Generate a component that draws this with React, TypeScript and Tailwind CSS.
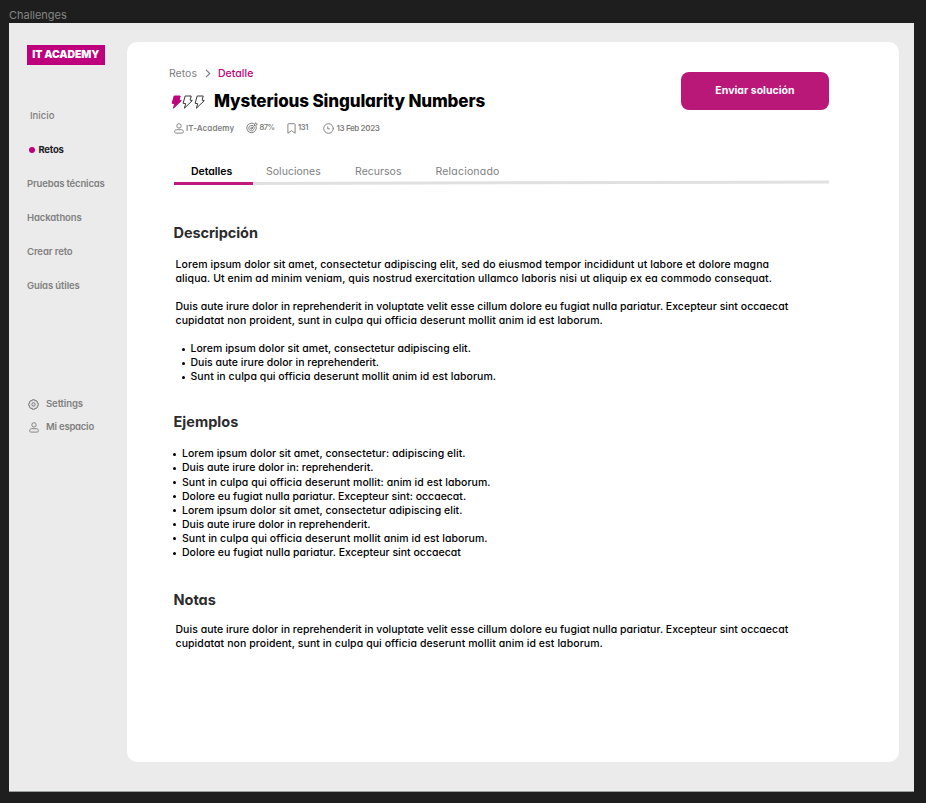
type LineProps = { text: string; tracking: string };

const description: LineProps[][] = [
  [
    { text: "Lorem ipsum dolor sit amet, consectetur adipiscing elit, sed do eiusmod tempor incididunt ut labore et dolore magna", tracking: "tracking-[0.081px]" },
    { text: "aliqua. Ut enim ad minim veniam, quis nostrud exercitation ullamco laboris nisi ut aliquip ex ea commodo consequat.", tracking: "tracking-[0.09px]" },
  ],
  [
    { text: "Duis aute irure dolor in reprehenderit in voluptate velit esse cillum dolore eu fugiat nulla pariatur. Excepteur sint occaecat", tracking: "tracking-[0.032px]" },
    { text: "cupidatat non proident, sunt in culpa qui officia deserunt mollit anim id est laborum.", tracking: "tracking-[0.08px]" },
  ],
];

const points: LineProps[] = [
  { text: "Lorem ipsum dolor sit amet, consectetur adipiscing elit.", tracking: "tracking-[0.036px]" },
  { text: "Duis aute irure dolor in reprehenderit.", tracking: "tracking-[0.01px]" },
  { text: "Sunt in culpa qui officia deserunt mollit anim id est laborum.", tracking: "tracking-[0.07px]" },
];

const examples: LineProps[] = [
  { text: "Lorem ipsum dolor sit amet, consectetur: adipiscing elit.", tracking: "tracking-[0.033px]" },
  { text: "Duis aute irure dolor in: reprehenderit.", tracking: "tracking-[0.003px]" },
  { text: "Sunt in culpa qui officia deserunt mollit: anim id est laborum.", tracking: "tracking-[0.066px]" },
  { text: "Dolore eu fugiat nulla pariatur. Excepteur sint: occaecat.", tracking: "tracking-[0px]" },
  { text: "Lorem ipsum dolor sit amet, consectetur adipiscing elit.", tracking: "tracking-[0.036px]" },
  { text: "Duis aute irure dolor in reprehenderit.", tracking: "tracking-[0.01px]" },
  { text: "Sunt in culpa qui officia deserunt mollit anim id est laborum.", tracking: "tracking-[0.07px]" },
  { text: "Dolore eu fugiat nulla pariatur. Excepteur sint occaecat", tracking: "tracking-[0.02px]" },
];

const nav = [
  { text: "Pruebas técnicas", tracking: "tracking-[-0.16px]" },
  { text: "Hackathons", tracking: "tracking-[-0.11px]" },
  { text: "Crear reto", tracking: "tracking-[-0.1px]" },
  { text: "Guías útiles", tracking: "tracking-[-0.11px]" },
];

function Paragraph({ lines }: { lines: LineProps[] }) {
  return (
    <p className="pl-[2px]">
      {lines.map((l) => (
        <span key={l.text} className={`block whitespace-nowrap ${l.tracking}`}>{l.text}</span>
      ))}
    </p>
  );
}

function Bullets({ items }: { items: LineProps[] }) {
  return (
    <ul>
      {items.map((l, i) => (
        <li key={i} className={`flex items-center whitespace-nowrap ${l.tracking}`}>
          <span className="mr-[6px] size-[3px] rounded-full bg-black" />
          {l.text}
        </li>
      ))}
    </ul>
  );
}

function UserIcon({ className }: { className: string }) {
  return (
    <svg viewBox="0 0 10 11" className={className} fill="none" stroke="currentColor" strokeWidth="0.95">
      <circle cx="5" cy="2.9" r="2.2" />
      <path d="M2.6 6.7h4.8c1.2 0 2 .9 2 2s-.7 1.4-1.6 1.4H2.2c-.9 0-1.6-.4-1.6-1.4s.8-2 2-2Z" />
    </svg>
  );
}

function GearIcon() {
  return (
    <svg viewBox="0 0 12 12" className="size-[11px] shrink-0" fill="none" stroke="currentColor" strokeWidth="1.1" strokeLinejoin="round">
      <path d="M4.900.8h2.200l.5 1.100 1.200-.2 1.500 1.500-.2 1.200 1.100.5v2.200l-1.100.5.2 1.200-1.500 1.500-1.200-.2-.5 1.100H4.900l-.5-1.100-1.200.2-1.500-1.500.2-1.200-1.100-.5V4.900l1.100-.5-.2-1.200 1.500-1.500 1.200.2Z" />
      <circle cx="6" cy="6" r="1.800" />
    </svg>
  );
}

function Bolt({ filled }: { filled?: boolean }) {
  return (
    <svg viewBox="0 0 11 14" className={`h-[14px] w-[11px] ${filled ? "text-[#be007d]" : "text-[#2c2c2c]"}`} fill={filled ? "currentColor" : "none"} stroke="currentColor" strokeWidth="0.95" strokeLinejoin="round">
      <path d="M3.200 1h6L8.200 5.200l2.100.4L2.400 13.200l1.300-4.500-2.600-.4Z" />
    </svg>
  );
}

function TargetIcon() {
  return (
    <svg viewBox="0 0 12 12" className="size-[12px]" fill="none" stroke="currentColor" strokeWidth="1" strokeLinecap="round" strokeLinejoin="round">
      <path d="M7.500 1.500A4.800 4.800 0 1 0 10.200 4.600" />
      <path d="M7 3.700A2.800 2.800 0 1 0 8.300 5.500" />
      <circle cx="5.500" cy="6.300" r=".9" />
      <path d="m5.500 6.300 3-3M8.500 3.300V1.900L9.900.7v1.500h1.500l-1.300 1.200Z" />
    </svg>
  );
}

function BookmarkIcon() {
  return (
    <svg viewBox="0 0 9 11" className="h-[11px] w-[9px]" fill="none" stroke="currentColor" strokeWidth="0.95" strokeLinejoin="round">
      <path d="M1.600.7h5.800c.4 0 .7.3.7.7v8.800L4.500 7.700.9 10.200V1.400c0-.4.300-.7.700-.7Z" />
    </svg>
  );
}

function ClockIcon() {
  return (
    <svg viewBox="0 0 11 11" className="size-[11px]" fill="none" stroke="currentColor" strokeWidth="0.95" strokeLinecap="round">
      <circle cx="5.500" cy="5.500" r="4.800" />
      <path d="M4.700 3.900v2h1.900" />
    </svg>
  );
}

function Sidebar() {
  return (
    <aside className="w-[118px] shrink-0 text-[9.500px] leading-[14px] font-semibold text-[#808080]">
      <div className="mt-[22px] ml-[17.500px] flex h-[19.500px] w-[78.500px] items-center justify-center bg-[#be007d] text-[10.500px] font-black tracking-[-0.130px] whitespace-nowrap text-white">
        IT ACADEMY
      </div>
      <nav className="mt-[44px] ml-[18px] flex flex-col gap-5 whitespace-nowrap">
        <a className="ml-[3px] font-medium tracking-[0.031px]">Inicio</a>
        <a className="ml-[2px] flex items-center font-bold tracking-[-0.263px] text-[#1c1c1e]">
          <span className="mr-[3.500px] size-[6px] rounded-full bg-[#be007d]" />
          Retos
        </a>
        {nav.map((n) => (
          <a key={n.text} className={n.tracking}>{n.text}</a>
        ))}
      </nav>
      <div className="mt-[104.500px] ml-[19px] flex flex-col gap-[9px]">
        <a className="flex items-center gap-[7px] tracking-[-0.083px]"><GearIcon />Settings</a>
        <a className="flex items-center gap-[7px] tracking-[-0.220px]">
          <span className="flex w-[11px] justify-center"><UserIcon className="h-[11px] w-[10px]" /></span>
          Mi espacio
        </a>
      </div>
    </aside>
  );
}

export default function App() {
  return (
    <div className="h-[803px] w-[926px] overflow-hidden bg-[#1e1e1e] px-[9px] pt-2 font-['Inter','Liberation_Sans',sans-serif] [font-feature-settings:'cv11']">
      <div className="h-[15px] text-[11px] leading-[15px] tracking-[-0.020px] text-[#858585] [font-feature-settings:normal]">Challenges</div>
      <div className="flex h-[769px] w-[905px] border-b border-[#9a9e9e] bg-[#ebebeb]">
        <Sidebar />
        <main className="mt-[19px] h-[720px] w-[772px] rounded-[10px] bg-white pt-6 pr-[70px] pl-[42px]">
          <header className="flex justify-between">
            <div>
              <div className="flex h-[15px] items-center text-[10.500px] text-[#808080]">
                <span className="tracking-[0.021px]">Retos</span>
                <svg viewBox="0 0 6 9" className="mr-[7px] ml-[8px] h-[9px] w-[6px]" fill="none" stroke="currentColor" strokeWidth="1.200"><path d="m1 .8 3.700 3.700L1 8.200" /></svg>
                <span className="font-medium tracking-[0.020px] text-[#be007d]">Detalle</span>
              </div>
              <div className="mt-[9px] flex h-6 items-center pl-[2px]">
                <Bolt filled />
                <Bolt />
                <span className="ml-[1px]"><Bolt /></span>
                <h1 className="ml-[9px] text-[17px] font-extrabold tracking-[-0.120px] whitespace-nowrap text-black">Mysterious Singularity Numbers</h1>
              </div>
              <div className="mt-2 flex h-3 items-center pl-[4.500px] text-[8px] font-semibold whitespace-nowrap text-[#808080]">
                <UserIcon className="h-[11px] w-[10px]" />
                <span className="ml-[2.500px] w-[60px] tracking-[0.100px]">IT-Academy</span>
                <TargetIcon />
                <span className="ml-[1.500px] w-[27px] text-[7.500px] tracking-[-0.500px]">87%</span>
                <BookmarkIcon />
                <span className="ml-[2.500px] w-[25px] text-[7.500px] tracking-[-0.400px]">131</span>
                <ClockIcon />
                <span className="ml-[2.500px] tracking-[-0.364px]">13 Feb 2023</span>
              </div>
            </div>
            <button className="mt-[5.500px] h-[38.500px] w-[148px] rounded-[8px] bg-[#b91879] pt-px text-[10.500px] font-bold tracking-[0.020px] text-white">Enviar solución</button>
          </header>

          <div className="mt-[30px] mr-[0.500px] ml-[4.500px]">
            <div className="flex h-4 items-center text-[10.500px] text-[#808080]">
              <span className="ml-[17.500px] w-[75px] font-semibold tracking-[-0.020px] text-black">Detalles</span>
              <span className="w-[89px] tracking-[0.030px]">Soluciones</span>
              <span className="w-[80.500px] tracking-[0.029px]">Recursos</span>
              <span className="tracking-[0.190px]">Relacionado</span>
            </div>
            <div className="mt-[2px] flex h-[2.500px]">
              <div className="w-[79.500px] bg-[#be1a80]" />
              <div className="h-[2.500px] flex-1 origin-left -rotate-[0.150deg] bg-[#e0e0e0]" />
            </div>
          </div>

          <div className="ml-[4.500px] text-[10.500px] leading-[14.100px] font-medium text-black">
            <h2 className="mt-[38.500px] text-[14.500px] leading-5 font-bold tracking-[-0.080px] text-[#2c2c2c]">Descripción</h2>
            <div className="mt-[14.500px] flex flex-col gap-[14.100px]">
              {description.map((lines, i) => (
                <Paragraph key={i} lines={lines} />
              ))}
              <div className="pl-[8px]"><Bullets items={points} /></div>
            </div>
            <h2 className="mt-[28px] text-[14.500px] leading-5 font-bold tracking-[0.020px] text-[#2c2c2c]">Ejemplos</h2>
            <div className="-ml-[0.500px] mt-[15px]"><Bullets items={examples} /></div>
            <h2 className="mt-[29.500px] text-[14.500px] leading-5 font-bold tracking-[0px] text-[#2c2c2c]">Notas</h2>
            <div className="mt-[13px]"><Paragraph lines={description[1]} /></div>
          </div>
        </main>
      </div>
    </div>
  );
}
